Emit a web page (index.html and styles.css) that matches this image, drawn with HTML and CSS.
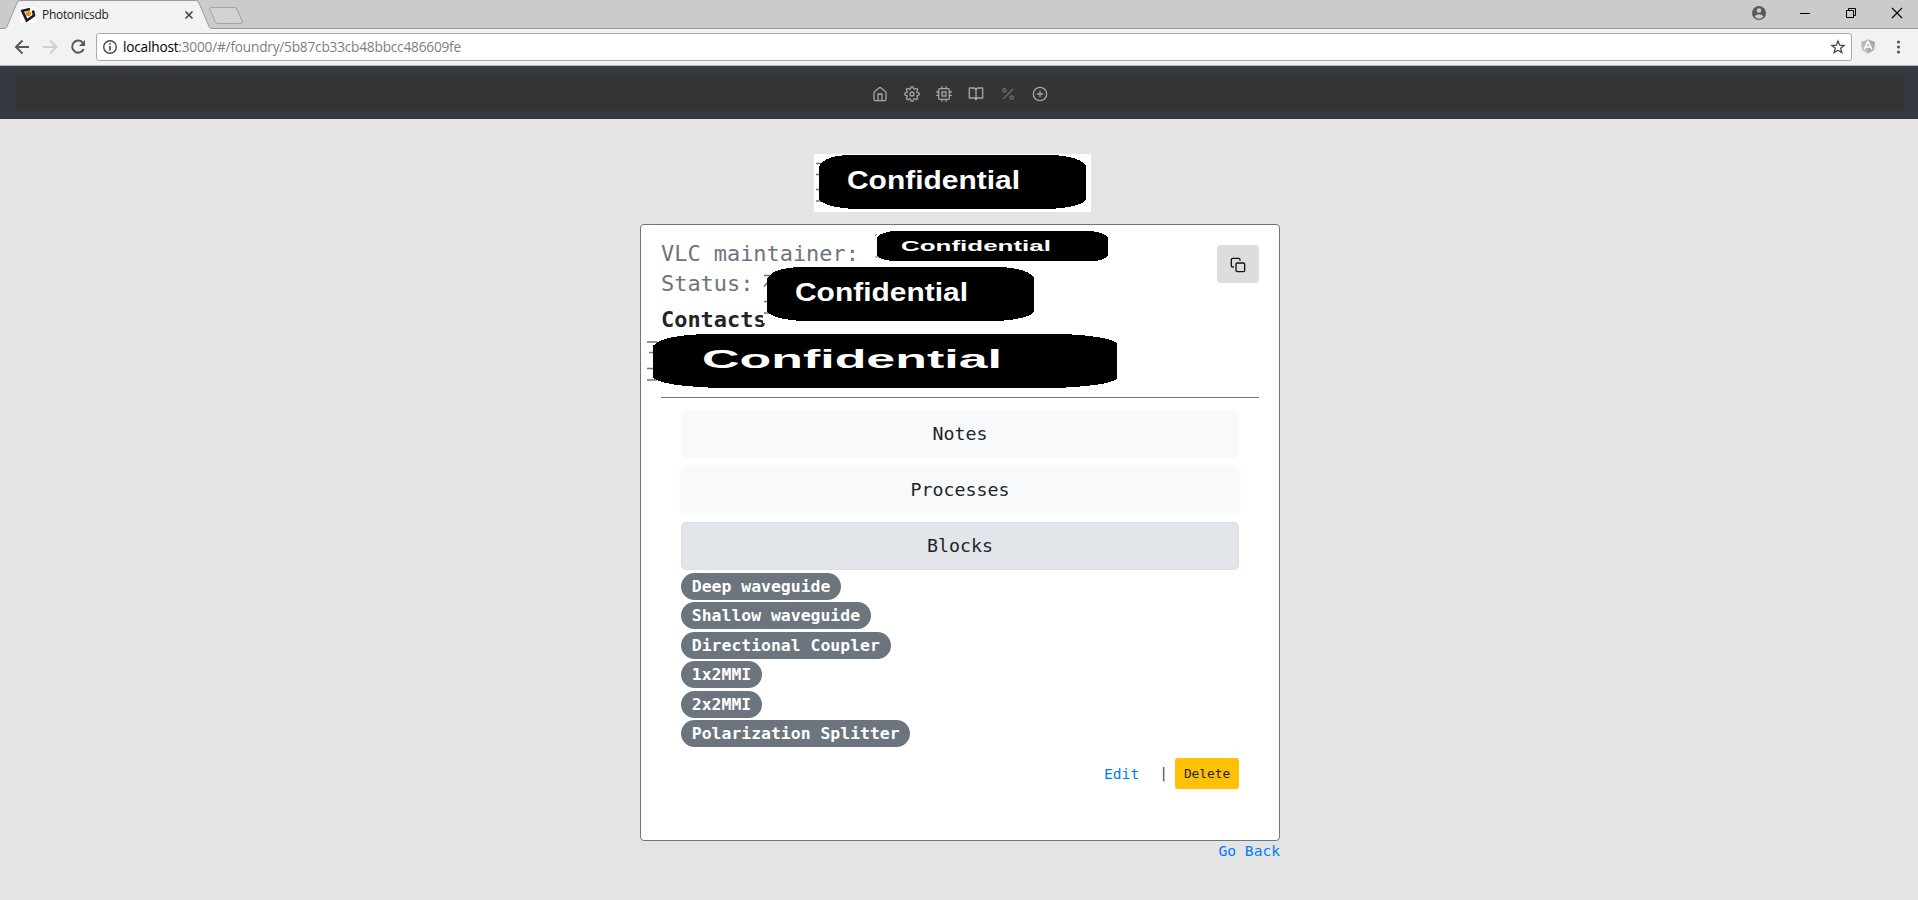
FILE: index.html
```html
<!DOCTYPE html>
<html lang="en">
<head>
<meta charset="utf-8">
<title>Photonicsdb</title>
<link rel="stylesheet" href="styles.css">
</head>
<body>
<header class="browser">
  <div class="tabstrip">
    <svg class="tabs" width="260" height="29" viewBox="0 0 260 29">
      <path d="M0 28.500H4Q6 28.500 7 26.500L17 3Q18 .5 20 .5H196Q198 .5 199 3L209 26.500Q210 28.500 212 28.500H260V29H0Z" fill="#f2f2f2"/>
      <path d="M0 28.500H4Q6 28.500 7 26.500L17 3Q18 .5 20 .5H196Q198 .5 199 3L209 26.500Q210 28.500 212 28.500H260" fill="none" stroke="#999"/>
      <path d="M211 7.500H234Q236 7.500 237 9L242 21Q243 23.500 241 23.500H218Q216 23.500 215 21.500L210 9.500Q209 7.500 211 7.500Z" fill="#d2d2d2" stroke="#a3a3a3"/>
      <rect x="20" y="7" width="16" height="16" fill="#fff"/>
      <path d="M30 9L22.300 10.800L26.800 20.500L34 15.500L33 10.500" fill="none" stroke="#1d1a19" stroke-width="2.600"/>
      <path d="M28.500 10.500L31.500 13L29.500 16.500L26 15.500L25.500 12.500Z" fill="#f08a1c"/>
      <path d="M185.500 11.500L192.500 18.500M192.500 11.500L185.500 18.500" stroke="#444" stroke-width="1.600"/>
    </svg>
    <span class="tab-title">Photonicsdb</span>
    <svg class="winctl" width="180" height="28" viewBox="0 0 180 28">
      <circle cx="21" cy="13" r="7" fill="#5a5a5a"/>
      <circle cx="21" cy="10.500" r="2.300" fill="#cbcbcb"/>
      <path d="M16.500 16.300Q21 12 25.500 16.300Q23.500 18.800 21 18.800T16.500 16.300Z" fill="#cbcbcb"/>
      <path d="M62 13.500H72" stroke="#000"/>
      <path d="M108.500 10.500H115.500V17.500H108.500ZM110.500 10V8.500H117.500V15.500H116" fill="none" stroke="#000"/>
      <path d="M154 8L164 18M164 8L154 18" stroke="#000" stroke-width="1.100"/>
    </svg>
  </div>
  <div class="toolbar">
    <svg width="96" height="36" viewBox="0 0 96 36" fill="none" stroke="#5a5a5a" stroke-width="2">
      <path d="M29 18H16.500M22.500 11.500L16 18L22.500 24.500"/>
      <path d="M43 18H56M50 11.500L56.500 18L50 24.500" stroke="#d0d0d0"/>
      <path d="M83 14A6 6 0 1 0 83.700 20"/>
      <path d="M85 11V17H79Z" fill="#5a5a5a" stroke="none"/>
    </svg>
    <div class="omnibox">
      <svg width="16" height="16" viewBox="0 0 16 16"><circle cx="8" cy="8" r="6.300" fill="none" stroke="#444" stroke-width="1.400"/><path d="M8 7V11.500M8 4.200V5.800" stroke="#444" stroke-width="1.700"/></svg>
      <span class="url"><b>localhost</b>:3000/#/foundry/5b87cb33cb48bbcc486609fe</span>
      <svg width="16" height="16" viewBox="0 0 16 16"><path d="M8 2L9.700 6.200L14.100 6.500L10.700 9.300L11.800 13.700L8 11.300L4.200 13.700L5.300 9.300L1.900 6.500L6.300 6.200Z" fill="none" stroke="#444" stroke-width="1.300"/></svg>
    </div>
    <svg width="66" height="36" viewBox="0 0 66 36">
      <path d="M16 10.500L23 13L22 21L16 24.500L10 21L9 13Z" fill="#b9b9b9"/>
      <path d="M16 10.500L23 13L22 21L16 24.500Z" fill="#a9a9a9"/>
      <path d="M12 20.500L16 12.500L20 20.500M13.500 18H18.500" fill="none" stroke="#fff" stroke-width="1.600"/>
      <g fill="#5a5a5a"><circle cx="46.500" cy="13" r="1.600"/><circle cx="46.500" cy="18" r="1.600"/><circle cx="46.500" cy="23" r="1.600"/></g>
    </svg>
  </div>
</header>

<nav class="navbar">
  <div class="nav-inner">
    <svg class="ico" viewBox="0 0 24 24"><path d="M3 9l9-7 9 7v11a2 2 0 0 1-2 2H5a2 2 0 0 1-2-2z"/><path d="M9 22V12h6v10"/></svg>
    <svg class="ico" viewBox="0 0 24 24"><circle cx="12" cy="12" r="3"/><path d="M19.400 15a1.650 1.650 0 0 0 .33 1.820l.06.06a2 2 0 1 1-2.830 2.830l-.06-.06a1.650 1.650 0 0 0-2.820 1.170V21a2 2 0 0 1-4 0v-.09a1.650 1.650 0 0 0-2.900-1.180l-.06.06a2 2 0 1 1-2.830-2.830l.06-.06A1.650 1.650 0 0 0 3.090 14H3a2 2 0 0 1 0-4h.09a1.650 1.650 0 0 0 1.180-2.900l-.06-.06a2 2 0 1 1 2.830-2.830l.06.06A1.650 1.650 0 0 0 10 3.090V3a2 2 0 0 1 4 0v.09a1.650 1.650 0 0 0 2.820 1.180l.06-.06a2 2 0 1 1 2.830 2.830l-.06.06A1.650 1.650 0 0 0 20.910 10H21a2 2 0 0 1 0 4h-.09a1.650 1.650 0 0 0-1.510 1z"/></svg>
    <svg class="ico" viewBox="0 0 24 24"><rect x="4" y="4" width="16" height="16" rx="2"/><path d="M9 9h6v6H9zM9 1v3M15 1v3M9 20v3M15 20v3M20 9h3M20 14h3M1 9h3M1 14h3"/></svg>
    <svg class="ico" viewBox="0 0 24 24"><path d="M2 3h6a4 4 0 0 1 4 4v14a3 3 0 0 0-3-3H2zM22 3h-6a4 4 0 0 0-4 4v14a3 3 0 0 1 3-3h7z"/></svg>
    <svg class="ico dim" viewBox="0 0 24 24"><path d="M19 5L5 19"/><circle cx="6.500" cy="6.500" r="2.500"/><circle cx="17.500" cy="17.500" r="2.500"/></svg>
    <svg class="ico" viewBox="0 0 24 24"><circle cx="12" cy="12" r="10"/><path d="M12 8v8M8 12h8"/></svg>
  </div>
</nav>

<main class="page">
  <svg class="logo" width="277" height="58" viewBox="0 0 277 58">
    <rect width="277" height="58" fill="#fff"/>
    <path d="M2 9.500H8M2 20.500H5M2 35.500H5M2 47H8" stroke="#6c757d" stroke-width="1.500"/>
    <path class="blob" d="M5 13Q10 1 38 1H240Q267 3 272 12V46Q266 53 236 55H40Q10 53 5 45Z"/>
    <text class="mask" x="33" y="35" font-size="26" textLength="173" lengthAdjust="spacingAndGlyphs">Confidential</text>
  </svg>

  <section class="card">
    <div class="info">
      <div class="facts">
        <p class="fact">VLC maintainer:</p>
        <p class="fact">Status:</p>
        <h2 class="contacts">Contacts</h2>
      </div>
      <button class="copy" aria-label="Copy"><svg width="16" height="16" viewBox="0 0 24 24"><rect x="9" y="9" width="13" height="13" rx="2"/><path d="M5 15H4a2 2 0 0 1-2-2V4a2 2 0 0 1 2-2h9a2 2 0 0 1 2 2v1"/></svg></button>
      <svg class="cover cover-maintainer" width="235" height="32" viewBox="0 0 235 32">
        <path d="M1 5L3 3M1 26H4" stroke="#6c757d"/>
        <path class="blob" d="M3 6Q8 1 20 0H217Q231 2 234 6V25Q229 30 217 30H20Q6 29 3 25Z"/>
        <text class="mask" x="27" y="20" font-size="15" textLength="150" lengthAdjust="spacingAndGlyphs">Confidential</text>
      </svg>
      <svg class="cover cover-status" width="272" height="56" viewBox="0 0 272 56">
        <rect width="10" height="56" fill="#fff"/>
        <path d="M1 8.500H7M1 19.500L4 16M1 34.500H4M1 46H7" stroke="#6c757d" stroke-width="1.500"/>
        <path class="blob" d="M4 12Q9 1 37 0H239Q266 2 271 11V45Q265 52 235 54H39Q9 52 4 44Z"/>
        <text class="mask" x="32" y="34" font-size="26" textLength="173" lengthAdjust="spacingAndGlyphs">Confidential</text>
      </svg>
      <svg class="cover cover-contacts" width="472" height="56" viewBox="0 0 472 56">
        <path d="M0 8H10M2 18.500H6M0 34.500H6M0 46H10" stroke="#6c757d" stroke-width="1.500"/>
        <path class="blob" d="M6 12Q14 1 62 0H416Q460 2 470 9V45Q460 52 408 54H72Q16 52 6 44Z"/>
        <text class="mask" x="55" y="34" font-size="26" textLength="300" lengthAdjust="spacingAndGlyphs">Confidential</text>
      </svg>
    </div>
    <div class="details">
      <button class="section">Notes</button>
      <button class="section focus">Processes</button>
      <button class="section active">Blocks</button>
      <ul class="blocks">
        <li><span class="badge">Deep waveguide</span></li>
        <li><span class="badge">Shallow waveguide</span></li>
        <li><span class="badge">Directional Coupler</span></li>
        <li><span class="badge">1x2MMI</span></li>
        <li><span class="badge">2x2MMI</span></li>
        <li><span class="badge">Polarization Splitter</span></li>
      </ul>
      <div class="actions"><a class="link">Edit</a><span class="sep">|</span><button class="delete">Delete</button></div>
    </div>
  </section>
  <a class="link back">Go Back</a>
</main>
</body>
</html>
```
FILE: styles.css
```css
* { box-sizing: border-box; }
body { margin: 0; background: #e4e4e4; color: #212529; font: 14.6px/24px "DejaVu Sans Mono", monospace; height: 900px; overflow: hidden; }
svg { display: block; flex: none; }
button { border: 0; font-family: inherit; color: #212529; padding: 0; }

.browser { font-family: "Open Sans", "Noto Sans", sans-serif; }
.tabstrip { height: 29px; background: #cbcbcb; border-bottom: 1px solid #999; display: flex; position: relative; }
.tabs { position: absolute; left: 0; top: 0; }
.tab-title { position: relative; margin-left: 42px; font-size: 12px; line-height: 30px; letter-spacing: -0.3px; color: #222; }
.winctl { margin-left: auto; }
.toolbar { height: 37px; background: #f2f2f2; border-bottom: 1px solid #b3b3b3; display: flex; align-items: center; }
.omnibox { flex: 1; height: 28px; border: 1px solid #a9a9a9; border-radius: 3px; background: #fff; display: flex; align-items: center; padding: 0 5px; gap: 5px; }
.url { flex: 1; font-size: 13.7px; line-height: 26px; letter-spacing: -0.22px; color: #808080; }
.url b { font-weight: 400; color: #000; }

.navbar { height: 53px; background: #343a40; padding: 8px 14px 8px 16px; }
.nav-inner { height: 37px; background: #343434; display: flex; justify-content: center; align-items: center; gap: 16px; padding-top: 3px; }
.ico { width: 16px; height: 16px; fill: none; stroke: #a5a5a5; stroke-width: 2; stroke-linecap: round; stroke-linejoin: round; }
.dim { stroke: #6b6b6b; }

.page { width: 640px; margin: 0 auto; padding-top: 35px; display: flex; flex-direction: column; position: relative; left: 1px; }
.logo { margin: 0 0 12px 174px; }
.blob { shape-rendering: crispEdges; }
.mask { font-family: "Liberation Sans", Arial, sans-serif; font-weight: 700; fill: #fff; }
.card { height: 617px; background: #fff; border: 1px solid #6c757d; border-radius: 4px; padding: 0 20px; }
.info { height: 173px; border-bottom: 1px solid #6c757d; display: flex; justify-content: space-between; position: relative; }
.facts { padding-top: 14px; }
.fact { margin: 0; font-size: 21.92px; line-height: 30px; color: #6c757d; }
.contacts { margin: 6px 0 0; font-size: 21.92px; line-height: 30px; font-weight: 700; }
.copy { width: 42px; height: 38px; margin-top: 20px; border-radius: 4px; background: #ddd; display: grid; place-items: center; }
.copy svg { fill: none; stroke: #111; stroke-width: 2; stroke-linecap: round; stroke-linejoin: round; position: relative; top: 1px; }
.cover { position: absolute; }
.cover-maintainer { left: 213px; top: 6px; }
.cover-status { left: 102px; top: 42px; }
.cover-contacts { left: -14px; top: 109px; }

.details { padding: 12px 20px 0; display: flex; flex-direction: column; gap: 8px; }
.section { height: 48px; border-radius: 5px; background: #f8f9fa; font-size: 18.27px; padding-bottom: 2px; }
.focus { box-shadow: 0 0 0 2px #fbfcfc; }
.active { background: #e2e6ea; border: 1px solid #dae0e5; }
.blocks { list-style: none; margin: -5px 0 0; padding: 0; display: grid; gap: 2.4px; justify-items: start; }
.blocks li { height: 27px; display: flex; }
.badge { background: #6c757d; color: #fff; border-radius: 14px; padding: 0 10.8px; font-size: 16.44px; font-weight: 700; line-height: 27px; }
.actions { display: flex; justify-content: flex-end; align-items: center; margin-top: 3px; }
.link { color: #007bff; }
.actions .link { padding-top: 1px; }
.sep { margin: 0 7px 0 20px; color: #495057; }
.delete { width: 64px; height: 31px; border-radius: 3px; background: #ffc107; font-size: 12.8px; }
.back { align-self: flex-end; line-height: 20px; }
```
